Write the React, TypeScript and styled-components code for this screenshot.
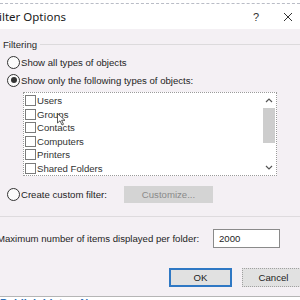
import styled, { createGlobalStyle } from "styled-components";

const GlobalStyle = createGlobalStyle`
	html, body {
		margin: 0;
		padding: 0;
		background: #ffffff;
	}
	body {
		font-family: "Liberation Sans", Arial, sans-serif;
		font-size: 9.6px;
		color: #1e1e1e;
	}
`;

const Screen = styled.div`
	width: 300px;
	height: 300px;
	overflow: hidden;
	display: flex;
	flex-direction: column;
	background: #f4f0f4;
`;

const TopStrip = styled.div`
	height: 3px;
	flex: none;
	background: #ffffff;
	border-bottom: 1px dashed #b9bcc6;
`;

const Dialog = styled.div`
	margin-left: -10px;
	width: 330px;
	flex: none;
	display: flex;
	flex-direction: column;
`;

const TitleBar = styled.div`
	height: 25px;
	display: flex;
	align-items: center;
	background: #ffffff;
	padding-left: 3px;
`;

const Title = styled.div`
	flex: 1;
	font-family: "Noto Sans", sans-serif;
	font-size: 11.5px;
	color: #1a1a1a;
`;

const TitleButton = styled.div<{ $w: number }>`
	width: ${(p) => p.$w}px;
	display: flex;
	justify-content: center;
	color: #333;
	font-size: 11px;
`;

const Body = styled.div`
	padding: 8px 0 0 13px;
	display: flex;
	flex-direction: column;
`;

const GroupHeader = styled.div`
	display: flex;
	align-items: center;
	height: 14px;
	color: #2a2a2a;
`;

const GroupLine = styled.div`
	flex: 1;
	height: 1px;
	margin-left: 3px;
	background: #dcdadc;
`;

const RadioRow = styled.div<{ $top: number }>`
	display: flex;
	align-items: center;
	margin-top: ${(p) => p.$top}px;
	height: 14px;
`;

const Radio = styled.span<{ $checked?: boolean }>`
	width: 11px;
	height: 11px;
	border: 1px solid #333;
	border-radius: 50%;
	margin: 0 1px 0 4px;
	display: flex;
	align-items: center;
	justify-content: center;
	background: #fbfbfb;
	&::after {
		content: "";
		width: 6px;
		height: 6px;
		border-radius: 50%;
		background: ${(p) => (p.$checked ? "#333" : "transparent")};
	}
`;

const ListBox = styled.div`
	margin: 5px 0 0 20px;
	width: 252px;
	height: 82px;
	border: 1px dotted #9a9a9a;
	background: #ffffff;
	display: flex;
	overflow: hidden;
`;

const Items = styled.div`
	flex: 1;
	padding: 1px 0 0 1px;
	display: flex;
	flex-direction: column;
`;

const Item = styled.div`
	height: 14px;
	display: flex;
	align-items: center;
	color: #333;
`;

const Check = styled.span`
	width: 9px;
	height: 9px;
	border: 1px solid #7a7a7a;
	background: #fff;
	margin-right: 1px;
`;

const ScrollBar = styled.div`
	width: 14px;
	display: flex;
	flex-direction: column;
	align-items: center;
	background: #ffffff;
`;

const Arrow = styled.div`
	height: 15px;
	display: flex;
	align-items: center;
	justify-content: center;
`;

const Thumb = styled.div`
	width: 12px;
	height: 35px;
	background: #cdcdcd;
`;

const Track = styled.div`
	flex: 1;
`;

const CustomRow = styled.div`
	display: flex;
	align-items: center;
	margin-top: 10px;
	height: 17px;
`;

const CustomLabel = styled.span`
	width: 103px;
`;

const GrayButton = styled.div`
	width: 89px;
	height: 17px;
	background: #d4d4d4;
	color: #8a8a8a;
	display: flex;
	align-items: center;
	justify-content: center;
`;

const Separator = styled.div`
	height: 1px;
	background: #dedbde;
	margin: 13px 0 0 -13px;
`;

const MaxRow = styled.div`
	display: flex;
	align-items: center;
	margin: 12px 0 0 -6px;
	height: 19px;
`;

const MaxLabel = styled.span`
	width: 216px;
	white-space: nowrap;
`;

const NumberInput = styled.div`
	width: 60px;
	height: 17px;
	border: 1px solid #8a8a8a;
	background: #ffffff;
	padding-left: 5px;
	display: flex;
	align-items: center;
`;

const Buttons = styled.div`
	display: flex;
	gap: 10px;
	margin: 20px 0 0 166px;
`;

const Button = styled.div<{ $primary?: boolean }>`
	width: 61px;
	height: 17px;
	display: flex;
	align-items: center;
	justify-content: center;
	background: #e1e1e1;
	border: 1px ${(p) => (p.$primary ? "solid #2f78c4" : "dotted #a0a0a0")};
	box-shadow: ${(p) => (p.$primary ? "inset 0 0 0 1px #2f78c4" : "none")};
	color: #222;
`;

const BottomStrip = styled.div`
	margin-top: 9px;
	height: 5px;
	flex: none;
	border-top: 1px solid #b5b5b5;
	background: #ffffff;
	overflow: hidden;
	display: flex;
	gap: 18px;
	padding-top: 1px;
	color: #2a6fb8;
	font-weight: 700;
	font-size: 11px;
	line-height: 11px;
`;

const items = ["Users", "Groups", "Contacts", "Computers", "Printers", "Shared Folders"];

const Chevron = ({ up }: { up?: boolean }) => (
	<svg width="8" height="5" viewBox="0 0 8 5">
		<path
			d={up ? "M1 4 L4 1 L7 4" : "M1 1 L4 4 L7 1"}
			fill="none"
			stroke="#555"
			strokeWidth="1.2"
		/>
	</svg>
);

const Cursor = () => (
	<svg
		width="9"
		height="13"
		viewBox="0 0 9 13"
		style={{ position: "absolute", left: 57, top: 113 }}
	>
		<path d="M0.5 0.5 L0.5 10 L3 7.8 L5 12 L6.5 11.3 L4.6 7.3 L8 7.3 Z" fill="#fff" stroke="#333" strokeWidth="0.8" />
	</svg>
);

export default function App() {
	return (
		<>
			<GlobalStyle />
			<Screen>
				<TopStrip />
				<Dialog>
					<TitleBar>
						<Title>Filter Options</Title>
						<TitleButton $w={32}>?</TitleButton>
						<TitleButton $w={32}>
							<svg width="10" height="10" viewBox="0 0 10 10">
								<path d="M1 1 L9 9 M9 1 L1 9" stroke="#333" strokeWidth="1" />
							</svg>
						</TitleButton>
						<TitleButton $w={16} />
					</TitleBar>
					<Body>
						<GroupHeader>
							Filtering
							<GroupLine />
						</GroupHeader>
						<RadioRow $top={4}>
							<Radio />
							Show all types of objects
						</RadioRow>
						<RadioRow $top={4}>
							<Radio $checked />
							Show only the following types of objects:
						</RadioRow>
						<ListBox>
							<Items>
								{items.map((name) => (
									<Item key={name}>
										<Check />
										{name}
									</Item>
								))}
							</Items>
							<ScrollBar>
								<Arrow>
									<Chevron up />
								</Arrow>
								<Thumb />
								<Track />
								<Arrow>
									<Chevron />
								</Arrow>
							</ScrollBar>
						</ListBox>
						<CustomRow>
							<Radio />
							<CustomLabel>Create custom filter:</CustomLabel>
							<GrayButton>Customize...</GrayButton>
						</CustomRow>
						<Separator />
						<MaxRow>
							<MaxLabel>Maximum number of items displayed per folder:</MaxLabel>
							<NumberInput>2000</NumberInput>
						</MaxRow>
						<Buttons>
							<Button $primary>OK</Button>
							<Button>Cancel</Button>
						</Buttons>
					</Body>
				</Dialog>
				<BottomStrip>
					<span>Publish List</span>
					<span>New</span>
				</BottomStrip>
				<Cursor />
			</Screen>
		</>
	);
}
